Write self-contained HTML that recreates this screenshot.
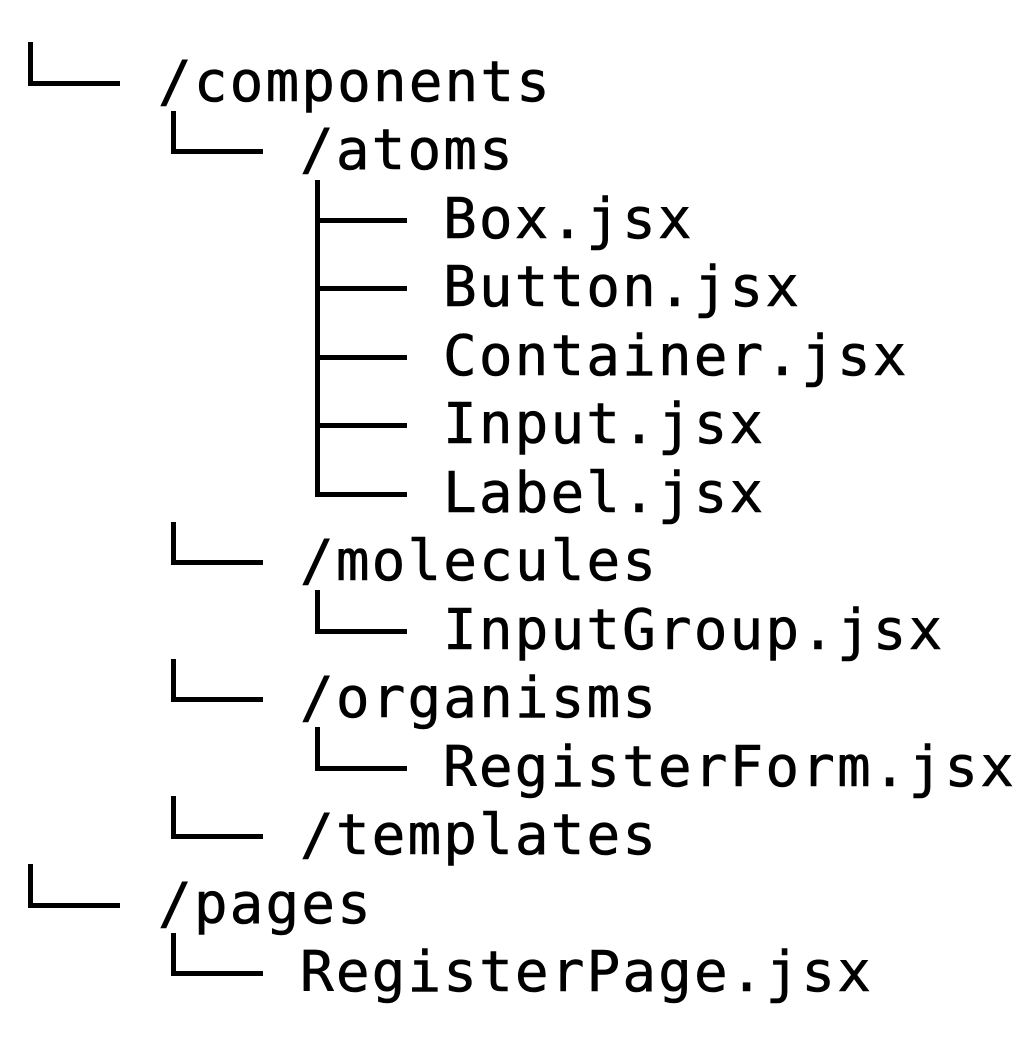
<!DOCTYPE html>
<html><head><meta charset="utf-8"><style>
body{margin:0;width:1034px;height:1048px;background:#fff;position:relative;overflow:hidden}
.t{position:absolute;font-family:"DejaVu Sans Mono","Liberation Mono",monospace;font-size:56px;letter-spacing:2.1px;line-height:68.5px;color:#000;white-space:pre;-webkit-text-stroke:0.6px #000}
.v,.h{position:absolute;background:#000}
.v{width:5px}
.h{height:5px}
</style></head><body>
<div class="v" style="left:28px;top:42px;height:44px"></div><div class="h" style="left:28px;top:81px;width:92px"></div>
<div class="t" style="left:158px;top:49px">/components</div>
<div class="v" style="left:171px;top:111px;height:43px"></div><div class="h" style="left:171px;top:149px;width:92px"></div>
<div class="t" style="left:300px;top:117px">/atoms</div>
<div class="v" style="left:315px;top:180px;height:317px"></div>
<div class="h" style="left:315px;top:218px;width:92px"></div>
<div class="h" style="left:315px;top:286px;width:92px"></div>
<div class="h" style="left:315px;top:355px;width:92px"></div>
<div class="h" style="left:315px;top:423px;width:92px"></div>
<div class="h" style="left:315px;top:492px;width:92px"></div>
<div class="t" style="left:443px;top:186px">Box.jsx</div>
<div class="t" style="left:443px;top:254px">Button.jsx</div>
<div class="t" style="left:443px;top:323px">Container.jsx</div>
<div class="t" style="left:443px;top:391px">Input.jsx</div>
<div class="t" style="left:443px;top:460px">Label.jsx</div>
<div class="v" style="left:171px;top:522px;height:43px"></div><div class="h" style="left:171px;top:560px;width:92px"></div>
<div class="t" style="left:300px;top:528px">/molecules</div>
<div class="v" style="left:315px;top:590px;height:44px"></div><div class="h" style="left:315px;top:629px;width:92px"></div>
<div class="t" style="left:443px;top:597px">InputGroup.jsx</div>
<div class="v" style="left:171px;top:659px;height:43px"></div><div class="h" style="left:171px;top:697px;width:92px"></div>
<div class="t" style="left:300px;top:665px">/organisms</div>
<div class="v" style="left:315px;top:727px;height:44px"></div><div class="h" style="left:315px;top:766px;width:92px"></div>
<div class="t" style="left:443px;top:734px">RegisterForm.jsx</div>
<div class="v" style="left:171px;top:796px;height:43px"></div><div class="h" style="left:171px;top:834px;width:92px"></div>
<div class="t" style="left:300px;top:802px">/templates</div>
<div class="v" style="left:28px;top:864px;height:44px"></div><div class="h" style="left:28px;top:903px;width:92px"></div>
<div class="t" style="left:158px;top:871px">/pages</div>
<div class="v" style="left:171px;top:933px;height:43px"></div><div class="h" style="left:171px;top:971px;width:92px"></div>
<div class="t" style="left:300px;top:939px">RegisterPage.jsx</div>
</body></html>
